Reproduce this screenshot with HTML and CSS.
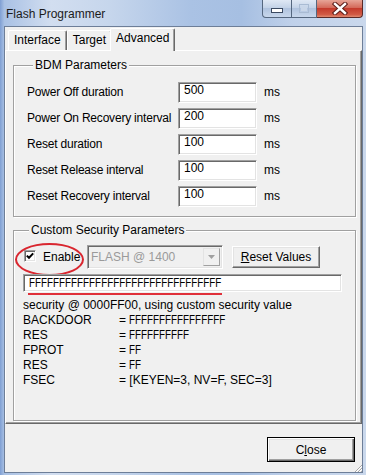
FILE: index.html
```html
<!DOCTYPE html>
<html lang="en">
<head>
    <meta charset="utf-8">
    <title>Flash Programmer</title>
    <link rel="stylesheet" href="styles.css">
</head>
<body>
    <div class="window">
        <div class="titlebar">
            <span class="title">Flash Programmer</span>
            <div class="caption">
                <span class="cap cap-min">
                    <svg width="12" height="5" viewBox="0 0 12 5"><rect x="0.5" y="0.5" width="11" height="4" fill="#fff" stroke="#3b4a62"/></svg>
                </span>
                <span class="cap cap-max">
                    <svg width="10" height="9" viewBox="0 0 10 9"><rect x="0.5" y="0.5" width="9" height="8" fill="none" stroke="#a9bbd3"/><rect x="2" y="3" width="6" height="4" fill="#c9d6e8"/></svg>
                </span>
                <span class="cap cap-close">
                    <svg width="16" height="13" viewBox="0 0 16 13">
                        <path d="M3 2 L13 11 M13 2 L3 11" stroke="#5a1d18" stroke-width="4.4" stroke-linecap="square"/>
                        <path d="M3 2 L13 11 M13 2 L3 11" stroke="#fff" stroke-width="2.4" stroke-linecap="square"/>
                    </svg>
                </span>
            </div>
        </div>

        <div class="client">
            <div class="tabs">
                <span class="tab">Interface</span>
                <span class="tab">Target</span>
                <span class="tab active">Advanced</span>
            </div>

            <div class="panel">
                <div class="group bdm">
                    <div class="group-title">BDM Parameters</div>
                    <div class="params">
                        <label>Power Off duration</label>
                        <input class="edit" type="text" value="500">
                        <span>ms</span>

                        <label>Power On Recovery interval</label>
                        <input class="edit" type="text" value="200">
                        <span>ms</span>

                        <label>Reset duration</label>
                        <input class="edit" type="text" value="100">
                        <span>ms</span>

                        <label>Reset Release interval</label>
                        <input class="edit" type="text" value="100">
                        <span>ms</span>

                        <label>Reset Recovery interval</label>
                        <input class="edit" type="text" value="100">
                        <span>ms</span>
                    </div>
                </div>

                <div class="group security">
                    <div class="group-title">Custom Security Parameters</div>
                    <div class="sec-row">
                        <label class="check">
                            <span class="box">
                                <svg width="8" height="8" viewBox="0 0 8 8"><path d="M0.8 3.6 L3 5.8 L7.2 1.4" fill="none" stroke="#000" stroke-width="2"/></svg>
                            </span>
                            Enable
                        </label>
                        <div class="combo">
                            <span class="combo-text">FLASH @ 1400</span>
                            <span class="combo-btn">
                                <svg width="7" height="4" viewBox="0 0 7 4"><path d="M0 0 H7 L3.5 4 Z" fill="#a0a0a0"/></svg>
                            </span>
                        </div>
                        <button class="btn"><u>R</u>eset Values</button>
                    </div>

                    <div class="field-wrap">
                        <div class="edit wide"><span class="hex">FFFFFFFFFFFFFFFFFFFFFFFFFFFFFFFF</span></div>
                    </div>

                    <div class="dump">
                        <span class="note">security @ 0000FF00, using custom security value</span>
                        <span>BACKDOOR</span><span>= <span class="hex">FFFFFFFFFFFFFFFF</span></span>
                        <span>RES</span><span>= <span class="hex">FFFFFFFFFF</span></span>
                        <span>FPROT</span><span>= <span class="hex">FF</span></span>
                        <span>RES</span><span>= <span class="hex">FF</span></span>
                        <span>FSEC</span><span>= [KEYEN=3, NV=F, SEC=3]</span>
                    </div>
                </div>
            </div>

            <div class="footer">
                <button class="btn default">C<u>l</u>ose</button>
                <span class="grip">
                    <svg width="7" height="7" viewBox="0 0 7 7">
                        <path d="M7 1 L1 7 M7 4 L4 7" stroke="#fff" stroke-width="1"/>
                        <path d="M7 0 L0 7 M7 3 L3 7 M7 6 L6 7" stroke="#a7a7a7" stroke-width="1"/>
                    </svg>
                </span>
            </div>
        </div>
    </div>
</body>
</html>
```

FILE: styles.css
```css
* {
    box-sizing: border-box;
}

body {
    margin: 0;
    font-family: "Liberation Sans", Arial, sans-serif;
    font-size: 12px;
    color: #000;
    background: #b5c9e6;
}

.window {
    width: 366px;
    height: 475px;
    display: flex;
    flex-direction: column;
    background: linear-gradient(90deg, #7f9fd3 0, #a9c1e4 1.2%, #d2def0 14%, #c6d6ec 30%, #aac2e4 52%, #a6bfe2 66%, #c0d1ea 80%, #cad8ec 100%);
}

/* title bar */
.titlebar {
    height: 26px;
    display: flex;
    justify-content: space-between;
}

.title {
    padding: 6px 0 0 6px;
    line-height: 16px;
    color: #1b1b1b;
}

.caption {
    display: flex;
    height: 18px;
    margin-right: 3px;
}

.cap {
    display: flex;
    align-items: center;
    justify-content: center;
    height: 18px;
    border: 1px solid #55677f;
    border-top: none;
    background: linear-gradient(#dfe8f4, #c4d3e8 45%, #b0c3de 50%, #c8d7ec);
}

.cap-min {
    width: 30px;
    border-radius: 0 0 0 4px;
    padding-top: 3px;
}

.cap-max {
    width: 25px;
    border-left: none;
}

.cap-close {
    width: 46px;
    border-left: none;
    border-color: #5b2a27;
    border-radius: 0 0 4px 0;
    background: linear-gradient(#e7a597, #d46a5a 45%, #c43b2c 50%, #d15a45 85%, #e08a70);
}

/* client area */
.client {
    flex: 1;
    margin: 0 3px 2px 4px;
    border: 1px solid #6d7e98;
    background: #f0f0f0;
    display: flex;
    flex-direction: column;
}

.tabs {
    height: 23px;
    display: flex;
    align-items: flex-end;
    padding-left: 3px;
}

.tab {
    height: 20px;
    padding: 0 5px;
    line-height: 19px;
    border: 1px solid;
    border-color: #fff #696969 transparent #fff;
    border-bottom: none;
    border-radius: 2px 2px 0 0;
    box-shadow: inset -1px 0 #a0a0a0;
    background: #f0f0f0;
}

.tab.active {
    position: relative;
    z-index: 1;
    height: 23px;
    margin: 0 -2px -1px;
}

.panel {
    height: 374px;
    display: flex;
    flex-direction: column;
    border: 1px solid;
    border-color: #fff #696969 #696969 #fff;
    box-shadow: inset -1px -1px #a0a0a0;
}

/* group boxes */
.group {
    display: flex;
    flex-direction: column;
    margin: 0 5px 0 7px;
    border: 1px solid #a0a0a0;
    box-shadow: inset 1px 1px #fff, 1px 1px #fff;
}

.group-title {
    align-self: flex-start;
    margin: -7px 0 0 6px;
    padding: 0 2px;
    line-height: 13px;
    background: #f0f0f0;
}

.bdm {
    margin-top: 14px;
    padding: 0 0 9px 13px;
}

.params {
    margin-top: 10px;
    display: grid;
    grid-template-columns: 144px 79px auto;
    grid-auto-rows: 21px;
    row-gap: 5px;
    column-gap: 7px;
    align-items: center;
}

.params label,
.params span {
    line-height: 21px;
    white-space: nowrap;
}

.params label {
    letter-spacing: -0.2px;
}

.params .edit {
    grid-column: 2;
}

.edit {
    width: 79px;
    height: 21px;
    margin: 0;
    padding: 0 4px 6px 5px;
    font: inherit;
    color: #000;
    background: #fff;
    border: 1px solid;
    border-color: #a0a0a0 #fff #fff #a0a0a0;
    box-shadow: inset 1px 1px #696969, inset -1px -1px #e3e3e3;
    outline: none;
}

.security {
    flex: 1;
    margin-top: 13px;
    margin-bottom: 2px;
    padding: 0 13px 0 9px;
}

.sec-row {
    margin-top: 8px;
    height: 24px;
    display: flex;
    align-items: center;
}

.check {
    position: relative;
    width: 64px;
    height: 24px;
    display: flex;
    align-items: center;
    gap: 7px;
}

/* red marker drawn over the screenshot */
.check::after {
    content: "";
    position: absolute;
    left: -8px;
    top: -2px;
    width: 65px;
    height: 29px;
    border: 2px solid #d9262f;
    border-radius: 50%;
}

.box {
    width: 12px;
    height: 12px;
    margin: 0 0 2px 1px;
    display: flex;
    align-items: center;
    justify-content: center;
    background: #fff;
    border: 1px solid;
    border-color: #a0a0a0 #fff #fff #a0a0a0;
    box-shadow: inset 1px 1px #696969, inset -1px -1px #e3e3e3;
}

.combo {
    width: 136px;
    height: 24px;
    display: flex;
    border: 1px solid;
    border-color: #a0a0a0 #fff #fff #a0a0a0;
    box-shadow: inset 1px 1px #696969, inset -1px -1px #e3e3e3;
    padding: 2px;
}

.combo-text {
    flex: 1;
    padding-left: 1px;
    line-height: 19px;
    color: #9a9a9a;
}

.combo-btn {
    width: 17px;
    display: flex;
    align-items: center;
    justify-content: center;
    border: 1px solid;
    border-color: #e3e3e3 #a0a0a0 #a0a0a0 #e3e3e3;
}

.btn {
    height: 22px;
    margin: 0 0 0 9px;
    padding: 0;
    width: 88px;
    font: inherit;
    color: #000;
    background: #f0f0f0;
    border: 1px solid;
    border-color: #fff #696969 #696969 #fff;
    box-shadow: inset -1px -1px #a0a0a0, inset 1px 1px #e3e3e3;
}

.field-wrap {
    position: relative;
    margin-top: 5px;
}

.edit.wide {
    width: 319px;
    height: 18px;
    padding: 0 4px 0 5px;
    line-height: 16px;
    white-space: nowrap;
    overflow: hidden;
}

.field-wrap::after {
    content: "";
    position: absolute;
    left: 5px;
    top: 19px;
    width: 194px;
    height: 2px;
    background: #e0303a;
}

.dump {
    margin-top: 6px;
    display: grid;
    grid-template-columns: 96px 1fr;
    line-height: 15px;
}

.dump .note {
    grid-column: span 2;
}

/* the dialog font has narrow capitals; squeeze the long F runs to its width */
.hex {
    display: inline-block;
    transform: scaleX(0.82);
    transform-origin: 0 50%;
}

/* footer */
.footer {
    flex: 1;
    display: flex;
    justify-content: flex-end;
    align-items: flex-start;
    padding-top: 13px;
}

.btn.default {
    height: 25px;
    margin: 0;
    border: 1px solid #000;
    box-shadow: inset 1px 1px #fff, inset -1px -1px #696969, inset -2px -2px #a0a0a0, inset 2px 2px #e3e3e3;
}

.grip {
    align-self: flex-end;
    width: 7px;
    height: 7px;
    display: flex;
}
```
